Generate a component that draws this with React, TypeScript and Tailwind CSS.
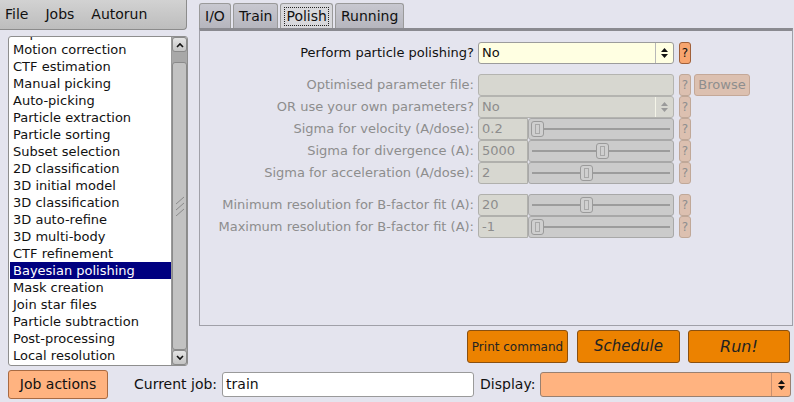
import React from "react";

const F = { fontFamily: '"DejaVu Sans", Verdana, sans-serif' };

const items = [
  "Import",
  "Motion correction",
  "CTF estimation",
  "Manual picking",
  "Auto-picking",
  "Particle extraction",
  "Particle sorting",
  "Subset selection",
  "2D classification",
  "3D initial model",
  "3D classification",
  "3D auto-refine",
  "3D multi-body",
  "CTF refinement",
  "Bayesian polishing",
  "Mask creation",
  "Join star files",
  "Particle subtraction",
  "Post-processing",
  "Local resolution",
];

function UpDown({ disabled }: { disabled?: boolean }) {
  const c = disabled ? "#9a9a9a" : "#111";
  return (
    <svg width="9" height="12" viewBox="0 0 9 12">
      <path d="M4.5 1 L8 5 L1 5 Z" fill={c} />
      <path d="M4.5 11 L8 7 L1 7 Z" fill={c} />
    </svg>
  );
}

function Help({ disabled }: { disabled?: boolean }) {
  return (
    <div
      className={
        "ml-[5px] flex h-[22px] w-[12px] items-center justify-center rounded-[3px] border text-[12px] " +
        (disabled
          ? "border-[#c0a898] bg-[#dcc0b0] text-[#8e8e8e]"
          : "border-[#a0603a] bg-[#f7a56f] text-[#111]")
      }
    >
      ?
    </div>
  );
}

function Label({ children, disabled }: { children: React.ReactNode; disabled?: boolean }) {
  return (
    <div
      className={
        "w-[278px] shrink-0 pr-[4px] text-right text-[13px] leading-[22px] " +
        (disabled ? "text-[#8d8d8d]" : "text-[#111]")
      }
    >
      {children}
    </div>
  );
}

function Slider({ value, pos }: { value: string; pos: number }) {
  return (
    <>
      <div className="flex h-[22px] w-[50px] items-center rounded-l-[3px] border border-[#b0b0ac] bg-[#d7d7d0] pl-[3px] text-[13px] text-[#8d8d8d]">
        {value}
      </div>
      <div className="relative h-[22px] w-[146px] rounded-[3px] border border-[#a8a8a8] bg-[#cbcbcb]">
        <div className="absolute left-[3px] right-[3px] top-[9px] h-[2px] bg-[#9c9c9c]" />
        <div
          className="absolute top-[2px] h-[16px] w-[13px] rounded-[3px] border border-[#9a9a9a] bg-[#cfcfcf]"
          style={{ left: pos }}
        >
          <div className="mx-auto mt-[2px] h-[10px] w-[5px] border border-[#a8a8a8]" />
        </div>
      </div>
      <Help disabled />
    </>
  );
}

export default function App() {
  return (
    <div
      className="flex h-[402px] w-[794px] flex-col overflow-hidden bg-[#e4e4ee] text-[13px] text-[#111]"
      style={F}
    >
      <div className="flex h-[366px]">
        {/* Left column */}
        <div className="w-[199px] shrink-0">
          <div className="flex h-[30px] w-[187px] items-center rounded-br-[4px] border-b border-r border-[#8c8c8c] bg-gradient-to-b from-[#d2d2d2] to-[#bdbdbd] text-[14px]">
            <span className="ml-[5px]">File</span>
            <span className="ml-[17px]">Jobs</span>
            <span className="ml-[17px]">Autorun</span>
          </div>
          <div className="ml-[8px] mt-[6px] flex h-[330px] w-[180px] overflow-hidden rounded-[3px] border border-[#8e8e8e] bg-white">
            <div className="relative flex-1 overflow-hidden">
              <div className="absolute left-[1px] right-0 top-[-13px]">
                {items.map((t) => (
                  <div
                    key={t}
                    className={
                      "h-[17px] pl-[3px] text-[13px] leading-[17px] " +
                      (t === "Bayesian polishing" ? "bg-[#000080] text-white" : "text-[#111]")
                    }
                  >
                    {t}
                  </div>
                ))}
              </div>
            </div>
            <div className="flex w-[16px] flex-col border-l border-[#9a9a9a] bg-[#a8a8a8]">
              <div className="flex h-[15px] items-center justify-center rounded-[3px] border border-[#8a8a8a] bg-gradient-to-b from-[#e4e4e4] to-[#c4c4c4]">
                <svg width="8" height="6" viewBox="0 0 8 6">
                  <path d="M1 5 L4 2 L7 5" stroke="#111" strokeWidth="1.6" fill="none" />
                </svg>
              </div>
              <div className="h-[10px]" />
              <div className="flex flex-1 items-center justify-center rounded-[3px] border border-[#8a8a8a] bg-[#c2c2c2]">
                <svg width="10" height="20" viewBox="0 0 10 20">
                  <path d="M1 8 L9 1 M1 14 L9 7 M1 20 L9 13" stroke="#8a8a8a" strokeWidth="1" />
                </svg>
              </div>
              <div className="flex h-[15px] items-center justify-center rounded-[3px] border border-[#8a8a8a] bg-gradient-to-b from-[#e4e4e4] to-[#c4c4c4]">
                <svg width="8" height="6" viewBox="0 0 8 6">
                  <path d="M1 1 L4 4 L7 1" stroke="#111" strokeWidth="1.6" fill="none" />
                </svg>
              </div>
            </div>
          </div>
        </div>

        {/* Right column */}
        <div className="flex w-[594px] flex-col">
          <div className="flex h-[28px] items-end gap-[2px] pb-0 pt-[3px]">
            {["I/O", "Train", "Polish", "Running"].map((t) => (
              <div
                key={t}
                className={
                  "flex h-[25px] items-center rounded-t-[3px] border border-b-0 border-[#9a9a9a] px-[3px] text-[14px] " +
                  (t === "Polish" ? "bg-[#d8d8dc]" : "bg-gradient-to-b from-[#c8c8d0] to-[#b6b6be]")
                }
              >
                <span className={t === "Polish" ? "border border-dotted border-[#222] px-[1px] leading-[17px]" : "px-[2px]"}>
                  {t}
                </span>
              </div>
            ))}
          </div>
          <div className="h-[298px] border-r border-b border-l border-t-[3px] border-[#a0a0a8] border-t-[#8a8a90] bg-[#e4e4ee]">
            <div className="mt-[11px] flex items-center">
              <Label>Perform particle polishing?</Label>
              <div className="flex h-[22px] w-[196px] items-center rounded-[3px] border border-[#9c9c9c] bg-[#ffffe2]">
                <span className="flex-1 pl-[3px] text-[13px]">No</span>
                <div className="flex h-full w-[18px] items-center justify-center border-l border-[#b8b8b8]">
                  <UpDown />
                </div>
              </div>
              <Help />
            </div>

            <div className="mt-[10px] flex items-center">
              <Label disabled>Optimised parameter file:</Label>
              <div className="h-[22px] w-[196px] rounded-[3px] border border-[#b4b4b0] bg-[#d7d7d0]" />
              <Help disabled />
              <div className="ml-[3px] flex h-[22px] w-[56px] items-center justify-center rounded-[3px] border border-[#c4a898] bg-[#dcc0b0] text-[13px] text-[#8e8e8e]">
                Browse
              </div>
            </div>
            <div className="flex items-center">
              <Label disabled>OR use your own parameters?</Label>
              <div className="flex h-[22px] w-[196px] items-center rounded-[3px] border border-[#b4b4b0] bg-[#d7d7d0]">
                <span className="flex-1 pl-[3px] text-[13px] text-[#8d8d8d]">No</span>
                <div className="flex h-full w-[18px] items-center justify-center border-l border-[#f4f4e8]">
                  <UpDown disabled />
                </div>
              </div>
              <Help disabled />
            </div>
            <div className="flex items-center">
              <Label disabled>Sigma for velocity (A/dose):</Label>
              <Slider value="0.2" pos={2} />
            </div>
            <div className="flex items-center">
              <Label disabled>Sigma for divergence (A):</Label>
              <Slider value="5000" pos={67} />
            </div>
            <div className="flex items-center">
              <Label disabled>Sigma for acceleration (A/dose):</Label>
              <Slider value="2" pos={51} />
            </div>
            <div className="mt-[10px] flex items-center">
              <Label disabled>Minimum resolution for B-factor fit (A):</Label>
              <Slider value="20" pos={51} />
            </div>
            <div className="flex items-center">
              <Label disabled>Maximum resolution for B-factor fit (A):</Label>
              <Slider value="-1" pos={2} />
            </div>
          </div>
          <div className="mt-[4px] flex justify-end pr-[3px]">
            <div className="flex h-[33px] w-[101px] items-center justify-center rounded-[3px] border border-[#8a5010] bg-[#ec8200] text-[12px] text-[#222]">
              Print command
            </div>
            <div className="ml-[9px] flex h-[33px] w-[103px] items-center justify-center rounded-[3px] border border-[#8a5010] bg-[#ec8200] text-[15px] italic text-[#222]">
              Schedule
            </div>
            <div className="ml-[8px] flex h-[33px] w-[102px] items-center justify-center rounded-[3px] border border-[#8a5010] bg-[#ec8200] text-[16px] italic text-[#222]">
              Run!
            </div>
          </div>
        </div>
      </div>

      {/* Bottom row */}
      <div className="mt-[4px] flex items-center">
        <div className="ml-[8px] flex h-[29px] w-[100px] items-center justify-center rounded-[3px] border border-[#a86a42] bg-[#ffb380] text-[14px]">
          Job actions
        </div>
        <span className="ml-[26px] text-[14px]">Current job:</span>
        <div className="ml-[5px] flex h-[25px] w-[252px] items-center rounded-[3px] border border-[#9a9a9a] bg-white pl-[3px] text-[14px]">
          train
        </div>
        <span className="ml-[6px] text-[14px]">Display:</span>
        <div className="ml-[5px] flex h-[25px] w-[251px] items-center rounded-[3px] border border-[#9a8070] bg-[#ffb380]">
          <div className="flex-1" />
          <div className="flex h-full w-[19px] items-center justify-center border-l border-[#c89070]">
            <UpDown />
          </div>
        </div>
      </div>
    </div>
  );
}
